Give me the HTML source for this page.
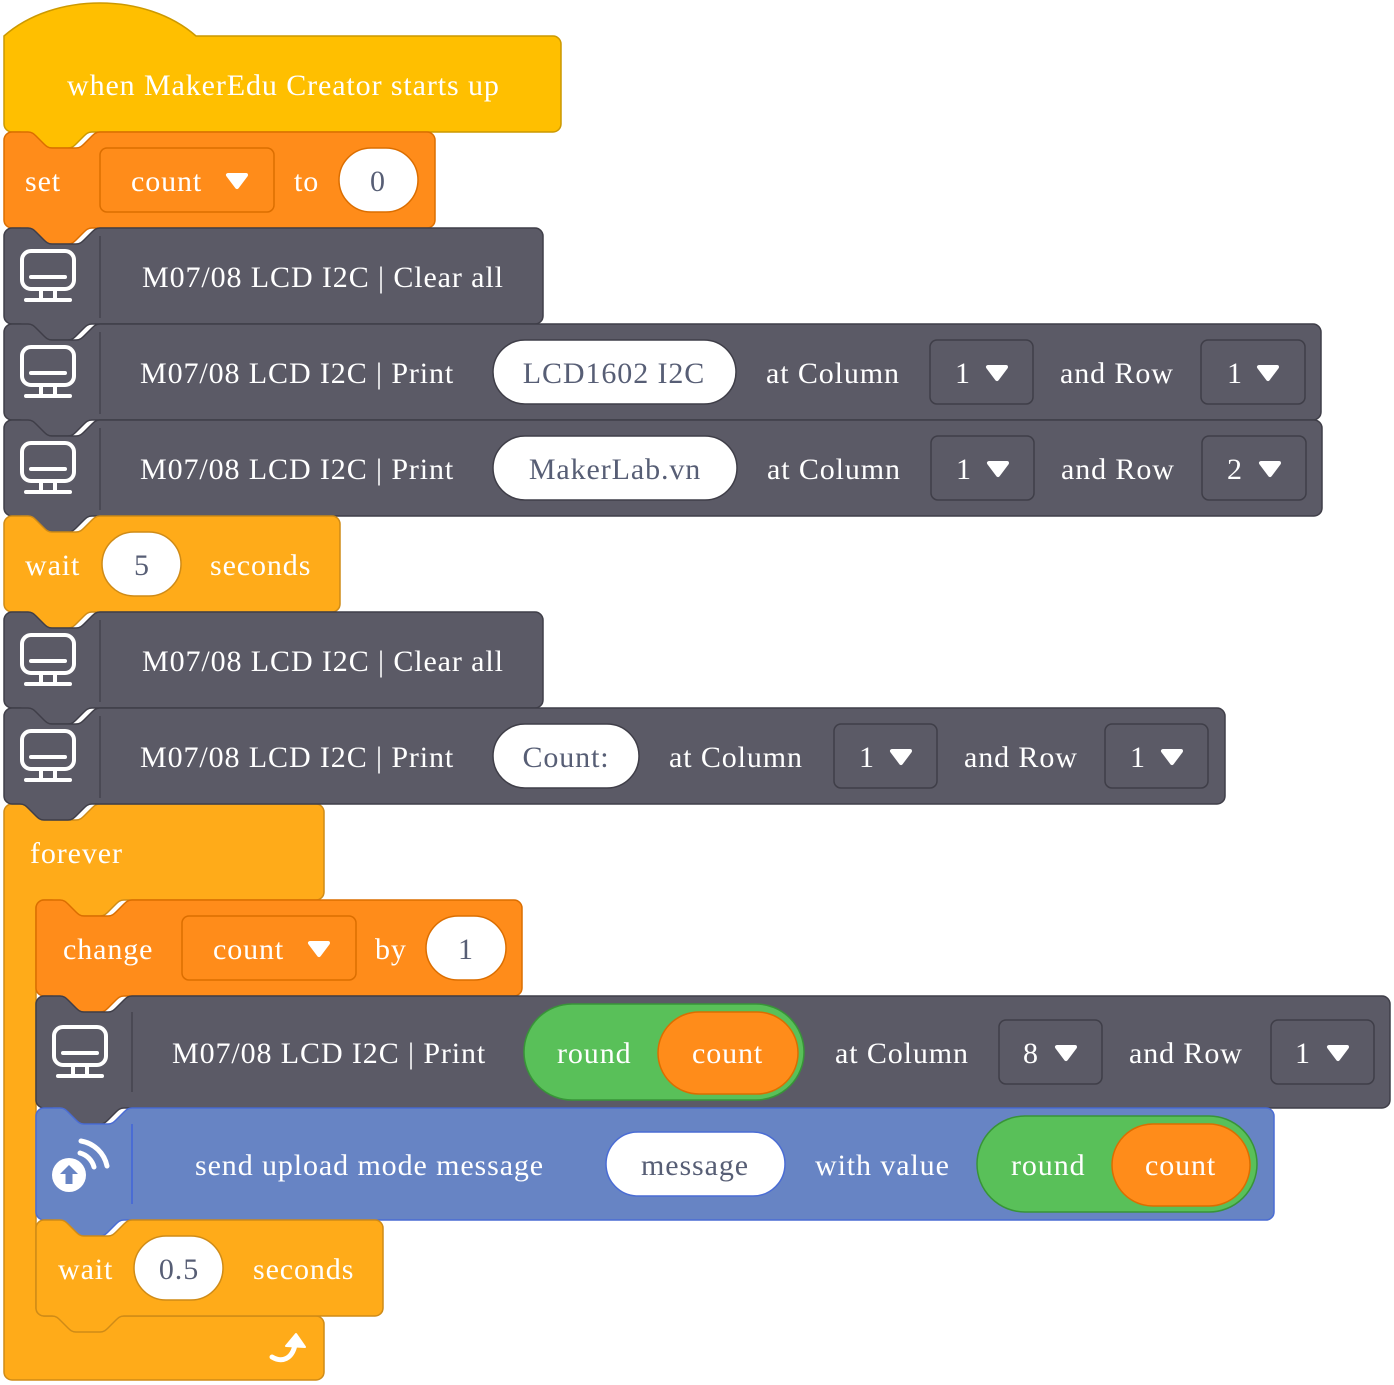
<!DOCTYPE html>
<html><head><meta charset="utf-8"><style>
html,body{margin:0;padding:0;background:#fff;}
svg{display:block}
text{font-family:"Liberation Serif",serif;font-size:30px;fill:#fff;letter-spacing:0.9px;}
.d{fill:#575E75}
</style></head><body>
<svg width="1394" height="1385" viewBox="0 0 1394 1385" xmlns="http://www.w3.org/2000/svg">
<defs>
<g id="mon" fill="none" stroke="#fff" stroke-width="4" stroke-linecap="round">
<rect x="0" y="0" width="52" height="38" rx="9"/>
<line x1="9" y1="26" x2="43" y2="26"/>
<line x1="19" y1="40" x2="19" y2="47"/><line x1="33" y1="40" x2="33" y2="47"/>
<line x1="4" y1="49" x2="48" y2="49"/>
</g>
<path id="tri" d="M-9 -6 h18 l-9 12 z" fill="#fff" stroke="#fff" stroke-width="4" stroke-linejoin="round"/>
</defs>

<path d="M4 812 a8 8 0 0 1 8-8 h16 c4 0 6 2 8 4 l8 8 c2 2 4 4 8 4 h24 c4 0 6-2 8-4 l8-8 c2-2 4-4 8-4 H316 a8 8 0 0 1 8 8 V892 a8 8 0 0 1-8 8 H124 c-4 0-6 2-8 4 l-8 8 c-2 2-4 4-8 4 h-24 c-4 0-6-2-8-4 l-8-8 c-2-2-4-4-8-4 H44 a8 8 0 0 0-8 8 V1308 a8 8 0 0 0 8 8 H316 a8 8 0 0 1 8 8 V1372 a8 8 0 0 1-8 8 H12 a8 8 0 0 1-8-8 z" fill="#FFAB19" stroke="#CF8B17" stroke-width="1.5"/>

<path d="M4 36 c50 -44 142 -44 192 0 H553 a8 8 0 0 1 8 8 V124 a8 8 0 0 1-8 8 H92 c-4 0-6 2-8 4 l-8 8 c-2 2-4 4-8 4 h-24 c-4 0-6-2-8-4 l-8-8 c-2-2-4-4-8-4 H12 a8 8 0 0 1-8-8 z" fill="#FFBF00" stroke="#CC9900" stroke-width="1.5"/>
<text x="67" y="95">when MakerEdu Creator starts up</text>

<path d="M4 140 a8 8 0 0 1 8-8 h16 c4 0 6 2 8 4 l8 8 c2 2 4 4 8 4 h24 c4 0 6-2 8-4 l8-8 c2-2 4-4 8-4 H427 a8 8 0 0 1 8 8 V220 a8 8 0 0 1-8 8 H92 c-4 0-6 2-8 4 l-8 8 c-2 2-4 4-8 4 h-24 c-4 0-6-2-8-4 l-8-8 c-2-2-4-4-8-4 H12 a8 8 0 0 1-8-8 z" fill="#FF8C1A" stroke="#DB6E00" stroke-width="1.5"/>
<text x="25" y="191">set</text>
<rect x="100" y="148" width="174" height="64" rx="7" fill="#FF8C1A" stroke="#DB6E00" stroke-width="1.5"/>
<text x="131" y="191">count</text><use href="#tri" x="237" y="181"/>
<text x="294" y="191">to</text>
<rect x="339" y="148" width="79" height="64" rx="32" fill="#fff" stroke="#DB6E00" stroke-width="1.5"/>
<text x="378" y="191" class="d" text-anchor="middle">0</text>

<path d="M4 236 a8 8 0 0 1 8-8 h16 c4 0 6 2 8 4 l8 8 c2 2 4 4 8 4 h24 c4 0 6-2 8-4 l8-8 c2-2 4-4 8-4 H535 a8 8 0 0 1 8 8 V316 a8 8 0 0 1-8 8 H92 c-4 0-6 2-8 4 l-8 8 c-2 2-4 4-8 4 h-24 c-4 0-6-2-8-4 l-8-8 c-2-2-4-4-8-4 H12 a8 8 0 0 1-8-8 z" fill="#5B5A66" stroke="#3F3E48" stroke-width="1.5"/>
<line x1="100" y1="236" x2="100" y2="318" stroke="#4a4954" stroke-width="2"/>
<use href="#mon" x="22" y="251"/>
<text x="142" y="287">M07/08 LCD I2C | Clear all</text>

<path d="M4 332 a8 8 0 0 1 8-8 h16 c4 0 6 2 8 4 l8 8 c2 2 4 4 8 4 h24 c4 0 6-2 8-4 l8-8 c2-2 4-4 8-4 H1313 a8 8 0 0 1 8 8 V412 a8 8 0 0 1-8 8 H92 c-4 0-6 2-8 4 l-8 8 c-2 2-4 4-8 4 h-24 c-4 0-6-2-8-4 l-8-8 c-2-2-4-4-8-4 H12 a8 8 0 0 1-8-8 z" fill="#5B5A66" stroke="#3F3E48" stroke-width="1.5"/>
<line x1="100" y1="332" x2="100" y2="414" stroke="#4a4954" stroke-width="2"/>
<use href="#mon" x="22" y="347"/>
<text x="140" y="383">M07/08 LCD I2C | Print</text>
<rect x="493" y="340" width="243" height="64" rx="32" fill="#fff" stroke="#3F3E48" stroke-width="1.5"/>
<text x="614" y="383" class="d" text-anchor="middle">LCD1602 I2C</text>
<text x="766" y="383">at Column</text>
<rect x="930" y="340" width="103" height="64" rx="7" fill="#5B5A66" stroke="#3F3E48" stroke-width="1.5"/>
<text x="955" y="383">1</text><use href="#tri" x="997" y="373"/>
<text x="1060" y="383">and Row</text>
<rect x="1201" y="340" width="104" height="64" rx="7" fill="#5B5A66" stroke="#3F3E48" stroke-width="1.5"/>
<text x="1227" y="383">1</text><use href="#tri" x="1268" y="373"/>

<path d="M4 428 a8 8 0 0 1 8-8 h16 c4 0 6 2 8 4 l8 8 c2 2 4 4 8 4 h24 c4 0 6-2 8-4 l8-8 c2-2 4-4 8-4 H1314 a8 8 0 0 1 8 8 V508 a8 8 0 0 1-8 8 H92 c-4 0-6 2-8 4 l-8 8 c-2 2-4 4-8 4 h-24 c-4 0-6-2-8-4 l-8-8 c-2-2-4-4-8-4 H12 a8 8 0 0 1-8-8 z" fill="#5B5A66" stroke="#3F3E48" stroke-width="1.5"/>
<line x1="100" y1="428" x2="100" y2="510" stroke="#4a4954" stroke-width="2"/>
<use href="#mon" x="22" y="443"/>
<text x="140" y="479">M07/08 LCD I2C | Print</text>
<rect x="493" y="436" width="244" height="64" rx="32" fill="#fff" stroke="#3F3E48" stroke-width="1.5"/>
<text x="615" y="479" class="d" text-anchor="middle">MakerLab.vn</text>
<text x="767" y="479">at Column</text>
<rect x="931" y="436" width="103" height="64" rx="7" fill="#5B5A66" stroke="#3F3E48" stroke-width="1.5"/>
<text x="956" y="479">1</text><use href="#tri" x="998" y="469"/>
<text x="1061" y="479">and Row</text>
<rect x="1202" y="436" width="104" height="64" rx="7" fill="#5B5A66" stroke="#3F3E48" stroke-width="1.5"/>
<text x="1227" y="479">2</text><use href="#tri" x="1270" y="469"/>

<path d="M4 524 a8 8 0 0 1 8-8 h16 c4 0 6 2 8 4 l8 8 c2 2 4 4 8 4 h24 c4 0 6-2 8-4 l8-8 c2-2 4-4 8-4 H332 a8 8 0 0 1 8 8 V604 a8 8 0 0 1-8 8 H92 c-4 0-6 2-8 4 l-8 8 c-2 2-4 4-8 4 h-24 c-4 0-6-2-8-4 l-8-8 c-2-2-4-4-8-4 H12 a8 8 0 0 1-8-8 z" fill="#FFAB19" stroke="#CF8B17" stroke-width="1.5"/>
<text x="25" y="575">wait</text>
<rect x="102" y="532" width="79" height="64" rx="32" fill="#fff" stroke="#CF8B17" stroke-width="1.5"/>
<text x="142" y="575" class="d" text-anchor="middle">5</text>
<text x="210" y="575">seconds</text>

<path d="M4 620 a8 8 0 0 1 8-8 h16 c4 0 6 2 8 4 l8 8 c2 2 4 4 8 4 h24 c4 0 6-2 8-4 l8-8 c2-2 4-4 8-4 H535 a8 8 0 0 1 8 8 V700 a8 8 0 0 1-8 8 H92 c-4 0-6 2-8 4 l-8 8 c-2 2-4 4-8 4 h-24 c-4 0-6-2-8-4 l-8-8 c-2-2-4-4-8-4 H12 a8 8 0 0 1-8-8 z" fill="#5B5A66" stroke="#3F3E48" stroke-width="1.5"/>
<line x1="100" y1="620" x2="100" y2="702" stroke="#4a4954" stroke-width="2"/>
<use href="#mon" x="22" y="635"/>
<text x="142" y="671">M07/08 LCD I2C | Clear all</text>

<path d="M4 716 a8 8 0 0 1 8-8 h16 c4 0 6 2 8 4 l8 8 c2 2 4 4 8 4 h24 c4 0 6-2 8-4 l8-8 c2-2 4-4 8-4 H1217 a8 8 0 0 1 8 8 V796 a8 8 0 0 1-8 8 H92 c-4 0-6 2-8 4 l-8 8 c-2 2-4 4-8 4 h-24 c-4 0-6-2-8-4 l-8-8 c-2-2-4-4-8-4 H12 a8 8 0 0 1-8-8 z" fill="#5B5A66" stroke="#3F3E48" stroke-width="1.5"/>
<line x1="100" y1="716" x2="100" y2="798" stroke="#4a4954" stroke-width="2"/>
<use href="#mon" x="22" y="731"/>
<text x="140" y="767">M07/08 LCD I2C | Print</text>
<rect x="493" y="724" width="146" height="64" rx="32" fill="#fff" stroke="#3F3E48" stroke-width="1.5"/>
<text x="566" y="767" class="d" text-anchor="middle">Count:</text>
<text x="669" y="767">at Column</text>
<rect x="834" y="724" width="103" height="64" rx="7" fill="#5B5A66" stroke="#3F3E48" stroke-width="1.5"/>
<text x="859" y="767">1</text><use href="#tri" x="901" y="757"/>
<text x="964" y="767">and Row</text>
<rect x="1105" y="724" width="103" height="64" rx="7" fill="#5B5A66" stroke="#3F3E48" stroke-width="1.5"/>
<text x="1130" y="767">1</text><use href="#tri" x="1172" y="757"/>

<text x="30" y="863">forever</text>

<path d="M36 908 a8 8 0 0 1 8-8 h16 c4 0 6 2 8 4 l8 8 c2 2 4 4 8 4 h24 c4 0 6-2 8-4 l8-8 c2-2 4-4 8-4 H514 a8 8 0 0 1 8 8 V988 a8 8 0 0 1-8 8 H124 c-4 0-6 2-8 4 l-8 8 c-2 2-4 4-8 4 h-24 c-4 0-6-2-8-4 l-8-8 c-2-2-4-4-8-4 H44 a8 8 0 0 1-8-8 z" fill="#FF8C1A" stroke="#DB6E00" stroke-width="1.5"/>
<text x="63" y="959">change</text>
<rect x="182" y="916" width="174" height="64" rx="7" fill="#FF8C1A" stroke="#DB6E00" stroke-width="1.5"/>
<text x="213" y="959">count</text><use href="#tri" x="319" y="949"/>
<text x="375" y="959">by</text>
<rect x="426" y="916" width="80" height="64" rx="32" fill="#fff" stroke="#DB6E00" stroke-width="1.5"/>
<text x="466" y="959" class="d" text-anchor="middle">1</text>

<path d="M36 1004 a8 8 0 0 1 8-8 h16 c4 0 6 2 8 4 l8 8 c2 2 4 4 8 4 h24 c4 0 6-2 8-4 l8-8 c2-2 4-4 8-4 H1382 a8 8 0 0 1 8 8 V1100 a8 8 0 0 1-8 8 H124 c-4 0-6 2-8 4 l-8 8 c-2 2-4 4-8 4 h-24 c-4 0-6-2-8-4 l-8-8 c-2-2-4-4-8-4 H44 a8 8 0 0 1-8-8 z" fill="#5B5A66" stroke="#3F3E48" stroke-width="1.5"/>
<line x1="132" y1="1012" x2="132" y2="1092" stroke="#4a4954" stroke-width="2"/>
<use href="#mon" x="54" y="1027"/>
<text x="172" y="1063">M07/08 LCD I2C | Print</text>
<rect x="524" y="1004" width="280" height="96" rx="48" fill="#59C059" stroke="#389438" stroke-width="1.5"/>
<text x="557" y="1063">round</text>
<rect x="658" y="1012" width="140" height="82" rx="41" fill="#FF8C1A" stroke="#DB6E00" stroke-width="1.5"/>
<text x="692" y="1063">count</text>
<text x="835" y="1063">at Column</text>
<rect x="999" y="1020" width="103" height="64" rx="7" fill="#5B5A66" stroke="#3F3E48" stroke-width="1.5"/>
<text x="1023" y="1063">8</text><use href="#tri" x="1066" y="1053"/>
<text x="1129" y="1063">and Row</text>
<rect x="1271" y="1020" width="103" height="64" rx="7" fill="#5B5A66" stroke="#3F3E48" stroke-width="1.5"/>
<text x="1295" y="1063">1</text><use href="#tri" x="1338" y="1053"/>

<path d="M36 1116 a8 8 0 0 1 8-8 h16 c4 0 6 2 8 4 l8 8 c2 2 4 4 8 4 h24 c4 0 6-2 8-4 l8-8 c2-2 4-4 8-4 H1266 a8 8 0 0 1 8 8 V1212 a8 8 0 0 1-8 8 H124 c-4 0-6 2-8 4 l-8 8 c-2 2-4 4-8 4 h-24 c-4 0-6-2-8-4 l-8-8 c-2-2-4-4-8-4 H44 a8 8 0 0 1-8-8 z" fill="#6784C4" stroke="#4A6CD4" stroke-width="1.5"/>
<line x1="132" y1="1124" x2="132" y2="1204" stroke="#4A6CD4" stroke-width="2"/>
<circle cx="69" cy="1175" r="17" fill="#fff"/>
<path d="M69 1165 l-9 9 h5.5 v10 h7 v-10 h5.5 z" fill="#6784C4"/>
<path d="M80 1153 a20 20 0 0 1 14 14" fill="none" stroke="#fff" stroke-width="5" stroke-linecap="round"/>
<path d="M81 1141 a32 32 0 0 1 26 25" fill="none" stroke="#fff" stroke-width="5" stroke-linecap="round"/>
<text x="195" y="1175">send upload mode message</text>
<rect x="606" y="1132" width="179" height="64" rx="32" fill="#fff" stroke="#4A6CD4" stroke-width="1.5"/>
<text x="695" y="1175" class="d" text-anchor="middle">message</text>
<text x="815" y="1175">with value</text>
<rect x="977" y="1116" width="280" height="96" rx="48" fill="#59C059" stroke="#389438" stroke-width="1.5"/>
<text x="1011" y="1175">round</text>
<rect x="1112" y="1124" width="138" height="82" rx="41" fill="#FF8C1A" stroke="#DB6E00" stroke-width="1.5"/>
<text x="1145" y="1175">count</text>

<path d="M36 1228 a8 8 0 0 1 8-8 h16 c4 0 6 2 8 4 l8 8 c2 2 4 4 8 4 h24 c4 0 6-2 8-4 l8-8 c2-2 4-4 8-4 H375 a8 8 0 0 1 8 8 V1308 a8 8 0 0 1-8 8 H124 c-4 0-6 2-8 4 l-8 8 c-2 2-4 4-8 4 h-24 c-4 0-6-2-8-4 l-8-8 c-2-2-4-4-8-4 H44 a8 8 0 0 1-8-8 z" fill="#FFAB19" stroke="#CF8B17" stroke-width="1.5"/>
<text x="58" y="1279">wait</text>
<rect x="134" y="1236" width="89" height="64" rx="32" fill="#fff" stroke="#CF8B17" stroke-width="1.5"/>
<text x="179" y="1279" class="d" text-anchor="middle">0.5</text>
<text x="253" y="1279">seconds</text>

<path d="M272 1357 c10 6 20 2 23 -12" fill="none" stroke="#fff" stroke-width="5" stroke-linecap="round"/>
<path d="M286 1346 l10 -12 l9 13 z" fill="#fff" stroke="#fff" stroke-width="2" stroke-linejoin="round"/>
</svg>
</body></html>
